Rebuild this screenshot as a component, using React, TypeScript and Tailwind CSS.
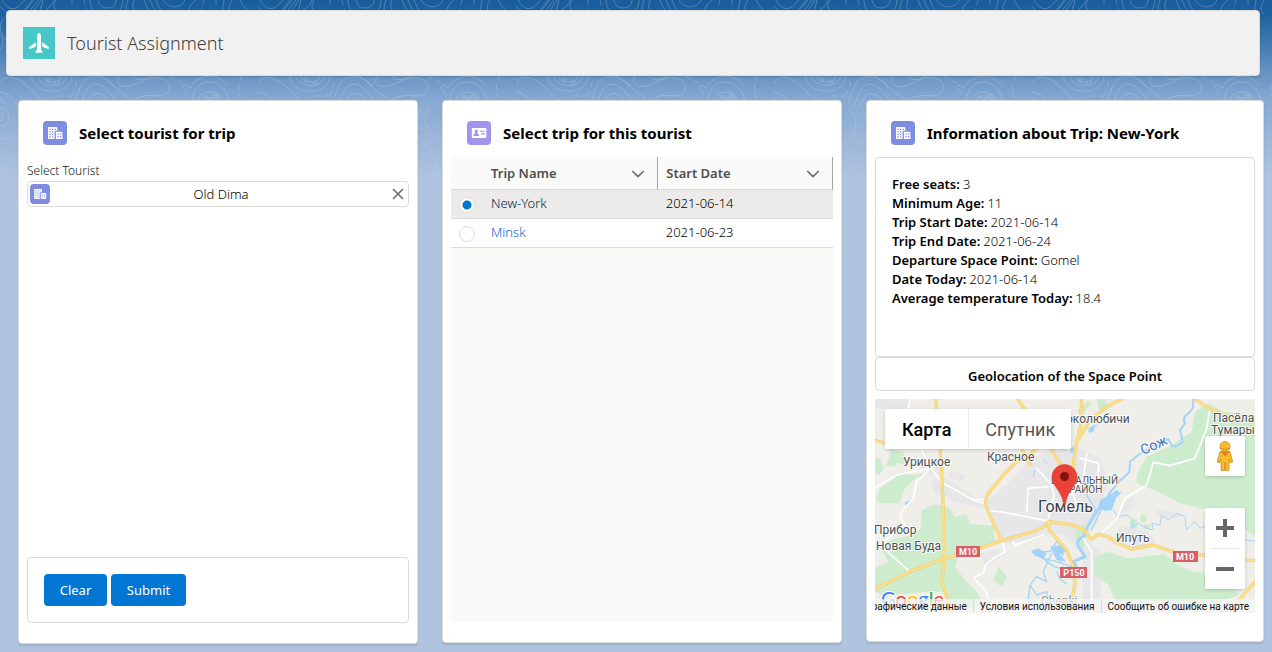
import { useState } from "react";
import type { ReactNode } from "react";

const trips = [
  { id: "ny", name: "New-York", start: "2021-06-14" },
  { id: "minsk", name: "Minsk", start: "2021-06-23" },
];

const details = [
  ["Free seats:", "3"],
  ["Minimum Age:", "11"],
  ["Trip Start Date:", "2021-06-14"],
  ["Trip End Date:", "2021-06-24"],
  ["Departure Space Point:", "Gomel"],
  ["Date Today:", "2021-06-14"],
  ["Average temperature Today:", "18.4"],
];

function BuildingIcon({ className }: { className: string }) {
  return (
    <svg viewBox="0 0 24 24" className={className} aria-hidden="true">
      <path fill="#fff" d="M5 6.7c0-.5.3-.7.7-.7h7.9c.4 0 .7.2.7.7v3.1h-1.6c-.7 0-1.1.4-1.1 1.1V18H5.7c-.4 0-.7-.3-.7-.7z" />
      <path fill="#fff" d="M12.9 11.3c0-.4.3-.6.6-.6h5.3c.4 0 .6.2.6.6v6.1c0 .4-.2.6-.6.6h-5.3c-.3 0-.6-.2-.6-.6z" />
      <path
        stroke="#7f8de1"
        strokeWidth="1.2"
        fill="none"
        d="M6.4 8.3h1.3M9 8.3h1.3M11.6 8.3h1.3M6.4 10.8h1.3M9 10.8h1.3M6.4 13.3h1.3M9 13.3h1.3M6.4 15.8h1.3M9 15.8h1.3M14.3 13.2h1.3M16.8 13.2h1.3M14.3 15.6h1.3M16.8 15.6h1.3"
      />
    </svg>
  );
}

function ContactIcon() {
  return (
    <svg viewBox="0 0 24 24" className="size-6 rounded bg-[#a094ed]" aria-hidden="true">
      <rect x="4.8" y="7" width="14.6" height="10" rx="1.2" fill="#fff" />
      <path fill="#a094ed" d="M9.2 8.8c1 0 1.6.7 1.6 1.6 0 .7-.3 1.2-.6 1.6-.1.4.1.6.5.8.9.4 1.4.8 1.4 1.6 0 .4-.3.6-.6.6H7c-.4 0-.6-.2-.6-.6 0-.8.5-1.2 1.4-1.6.4-.2.6-.4.4-.8-.3-.4-.6-.9-.6-1.6 0-.9.7-1.6 1.600-1.600z" />
      <path stroke="#a094ed" strokeWidth="1.1" d="M13 10.300h4.800M14 12.900h3.800" />
    </svg>
  );
}

function PlaneIcon() {
  return (
    <svg viewBox="0 0 32 32" className="size-8 bg-[#48c7c8]" aria-hidden="true">
      <path
        fill="#fff"
        d="M16 6c1.400 0 2 1.500 2 3v13.500l1.500 1.900c.5.6.2 1.400-.5 1.400h-6c-.7 0-1-.8-.5-1.400L14 22.500V9c0-1.500.6-3 2-3zM12.700 15.200v4.500l-5.200 2.100c-.9.300-1.600-.2-1.500-1 .1-.6.4-1 1-1.400zM19.300 15.200v4.500l5.200 2.100c.9.300 1.600-.2 1.500-1-.1-.6-.4-1-1-1.400z"
      />
    </svg>
  );
}

function Chevron() {
  return (
    <svg viewBox="0 0 14 14" className="size-[14px]" fill="none" stroke="#706e6b" strokeWidth="1.700" strokeLinecap="round" strokeLinejoin="round" aria-hidden="true">
      <path d="M1.800 4.500L7 9.700l5.200-5.200" />
    </svg>
  );
}

function Backdrop() {
  return (
    <svg className="absolute inset-x-0 top-0 -z-10 h-[200px] w-full" aria-hidden="true">
      <defs>
        <pattern id="contours" width="258" height="200" patternUnits="userSpaceOnUse">
          <g fill="none" stroke="#fff" strokeWidth="1">
            <path d="M2 0c5 9 12 12 19 4l4-4M-4 0c8 15 20 20 30 8l6-8M24 12l10-12M29 12l9-12M33 12l8-12M40 12l3-12" />
            <path d="M54 0c-2 8-10 10-14 14M58 12c-6-4-4-8-2-12" />
            <path d="M90 0c0 12 8 15 16 15s17-3 17-15M98 0c1 5 4 8 9 8s9-3 9-8M134 0c-3 8 0 12 6 14M128 0c-2 6-3 10 0 14" />
            <path d="M144 0c3 8 6 12 8 14M150 0c3 8 6 12 8 14M156 0c3 8 6 12 8 14M163 0c4 8 18 10 22 0M188 12c2-8 6-10 8-12" />
            <path d="M222 14c0-6 2-10 2-14M232 0c-4 6-4 10 0 14M240 0c4 8 9 12 14 14" />
            <path strokeDasharray="5 4" d="M72 0v14M84 0c2 8 2 10 4 14M204 0l-4 14M216 0v14" />
            <path d="M6 40c-8-8-8-20 4-26M0 34c4 6 4 12-2 18M0 108c6 0 9 4 9 9s-3 9-9 9M-1 113a4 4 0 0 1 0 8M0 92c14 2 24 20 24 38" />
            <path d="M32 70c-6 26 40 28 40 6M37 70c-2 20 30 20 30 4M42 73c0 12 20 12 20 2" />
            <circle cx="48" cy="80" r="2" />
            <circle cx="57" cy="83" r="2" />
            <path d="M1 84c2-10 14-8 24 0s12 16 24 18M-2 82c-3 8 0 16 8 22" />
            <path d="M74 104c4-10 6-22 14-26 8-2 16-2 24 6 10 12 16 10 22 20M80 106c4-12 8-22 16-22 10 0 16 14 24 20M86 106c4-10 8-14 14-12 6 2 10 8 12 14M88 73c14 2 18 6 26 14" />
            <path d="M120 74c-6 10 0 14 10 12s18-10 28-8c10 0 16 10 8 16-8 4-14 0-22 2s-12 4-16 10M134 76c4 6 12 4 22-2" />
            <path d="M192 106c0-16 6-24 18-24s20 14 20 26M198 106c0-10 4-14 12-14s14 8 14 14M188 94c-8-8-6-12 2-6 4-8 14-12 20-12s14 4 18 10" />
            <path d="M200 104l6-9 4 6 6-8 4 9M204 98h14M212 95l9 7" />
            <path strokeDasharray="5 4" d="M242 76c-6 10-4 18 2 30M170 76l14 8M58 96h16M76 82c0 8-4 12-6 18" />
            <path d="M0 140c20-6 28 10 18 24s-18 8-18 20M0 158c8-4 12 2 8 8s-8 6-8 6M164 106c-4 10-10 26 0 36s14 6 14 24-20 18-14 36M172 108c-6 6-8 18 2 24s18 18 8 34M160 128c8 0 12 8 8 14s-12 6-14 0 0-12 6-14" />
            <path d="M76 110c10 10 6 24-6 34s-8 24 4 34M88 110c10 16 4 28-6 38s-6 16 6 28M66 130c-6 0-8 8-4 12" />
            <path strokeDasharray="5 4" d="M20 110c8 18 0 30-10 40M240 110c10 20 0 40 10 60M170 150c10 10 10 20 0 34" />
          </g>
        </pattern>
        <linearGradient id="fade" x1="0" y1="0" x2="0" y2="1">
          <stop offset="0" stopColor="#fff" stopOpacity="0.24" />
          <stop offset="0.500" stopColor="#fff" stopOpacity="0.2" />
          <stop offset="1" stopColor="#fff" stopOpacity="0" />
        </linearGradient>
        <mask id="fadeMask">
          <rect width="100%" height="100%" fill="url(#fade)" />
        </mask>
      </defs>
      <rect width="100%" height="100%" fill="url(#contours)" mask="url(#fadeMask)" />
    </svg>
  );
}

const majorRoads = [
  "M197 12L210 160L215 230L222 400L222 490L216 560L228 600L245 654",
  "M15 582L120 530L222 490L300 470L395 437L490 410L520 396Q532 382 545 381L600 388L640 402L660 430Q668 434 676 424L690 418L715 426L745 446L785 462L850 450L925 476L1010 480L1080 492L1155 497",
  "M443 12L475 60L510 130L545 165L575 215",
  "M500 160Q470 190 440 200L400 240L355 295Q340 318 352 345L395 437",
  "M455 162L480 210",
  "M537 378L538 405L590 465L610 515L615 565L605 620L600 654",
  "M635 12L632 90L615 170L608 225",
  "M755 12Q690 40 655 85L620 140",
  "M975 12L1015 40L1075 65L1155 78",
  "M1155 560L1120 600L1100 625",
  "M15 137L60 147",
];

const minorRoads = [
  "M120 12L115 42",
  "M15 278L80 240L170 222L180 215L155 165M180 215L215 262L310 315L345 325M345 345L400 352L535 378M310 315L345 312",
  "M180 222L140 260L130 310L95 350Q88 370 104 386L60 425L35 450Q60 480 120 530",
  "M397 440L405 470L370 490L345 512L340 535L310 548L350 590L360 640",
  "M430 440L435 450L520 420M470 350L475 280L540 275M500 220L545 270L552 300L535 375M575 210L610 300L625 340",
  "M630 190L687 205L680 285M650 175L640 250L600 300",
  "M1020 40L1010 100L975 190L900 212L850 202L830 270L765 310L742 370L688 420",
  "M640 430L665 470L665 654",
];

const parks = [
  "M62 162L103 172L104 208L80 205L75 215L45 212L58 190z",
  "M15 190L30 190L42 220L28 240L15 236z",
  "M30 280L75 250L80 240L168 238L135 250L105 280L88 325L35 325L18 312z",
  "M155 345L195 328L235 335L255 365L290 358L300 388L370 392L375 440L300 462L270 480L255 515L285 555L320 590L345 640L250 630L225 590L175 590L40 602L15 590L15 520L55 500L25 450L80 430L130 420L152 400z",
  "M385 515L410 545L396 576L370 558z",
  "M800 240L830 185L905 150L965 110L975 50L1015 25L1060 50L1155 60L1155 425L1120 400L1075 335L1015 345L930 325L860 288L800 265z",
  "M672 490L710 470L775 490L885 478L915 505L965 530L1085 540L1105 600L1040 625L735 615L715 570L675 540z",
  "M780 375L800 372L802 396L780 394zM810 362L828 358L830 380L812 382zM820 390L840 388L838 402L822 402z",
  "M615 410L645 385L650 420L640 465L622 460z",
  "M680 12L705 12L715 40L690 60zM620 50L650 20L668 22L640 55z",
];

const cityBlocks = [
  "M430 250L470 205L520 170L610 150L690 190L715 250L700 310L680 380L645 430L695 470L690 654L640 654L635 470L580 420L545 415L480 440L400 445L365 370L350 320z",
  "M185 255L215 240L290 290L345 330L340 345L250 318L190 292z",
  "M15 12L118 12L115 42L15 42z",
  "M140 210L165 185L210 205L215 245L180 240zM240 225L285 240L275 262L238 250zM235 545L285 560L278 580L235 565z",
  "M330 475L390 460L400 480L350 512zM360 325L390 330L380 348z",
  "M745 400L790 388L850 425L855 455L780 460L740 440zM860 345L900 350L935 358L920 370L858 365zM770 320L790 300L800 335L745 360z",
];

function MapDrawing() {
  return (
    <svg viewBox="0 0 380 214" preserveAspectRatio="xMidYMid slice" className="block h-full w-full" role="img" aria-label="Гомель">
      <g transform="translate(-5 -4) scale(0.33333)" fill="none" strokeLinecap="round" strokeLinejoin="round">
        <path fill="#f0eee9" d="M0 0h1200v700H0z" />
        {cityBlocks.map((d) => (
          <path key={d} d={d} fill="#e7e7e9" />
        ))}
        {parks.map((d) => (
          <path key={d} d={d} fill="#cdecce" />
        ))}
        <g stroke="#a3d3f9">
          <path strokeWidth="6" d="M970 12L968 40L955 55Q935 70 945 85L930 105L938 140Q920 160 905 152L895 132L860 145L830 165L805 180L780 200L778 232L745 262L735 275L715 300" />
          <path strokeWidth="9" d="M740 290L705 320L680 350L655 390L640 425Q610 440 632 465L645 485L610 500L622 520" />
          <path strokeWidth="4" d="M680 350L650 300L660 270M700 330L665 405M620 520L560 500L520 490L490 470M500 470L540 470L560 440L585 460L570 500M520 490Q560 530 600 520M545 475L520 530L530 560L500 545L480 570L500 600L530 590L540 620L515 640M480 570L475 610L505 650M560 530Q570 560 590 565" />
          <path strokeWidth="3" d="M728 345L745 365L770 360L790 375L785 400L805 385L825 398L850 405L845 385L870 390L875 362L895 375L920 355L945 365L950 405L975 380L990 400L1010 392L1030 405L1060 400L1080 425L1120 435L1155 437" />
          <path strokeWidth="3" d="M655 110L665 95L680 90M115 325L128 310M490 245L495 225M520 195L530 205M210 200L230 188" />
        </g>
        <path fill="#a3d3f9" d="M690 315L718 300L735 290L755 292L738 310L725 345L705 348L685 335zM483 468L505 460L530 475L520 492L495 482zM540 455L575 450L595 465L570 480L590 500L560 495zM105 322L122 316L118 332L105 330zM602 160L615 155L612 170L600 175zM656 100L675 90L672 108L660 115z" />
        <g stroke="#fff" strokeWidth="5">
          {minorRoads.map((d) => (
            <path key={d} d={d} />
          ))}
        </g>
        <g stroke="#f0cf74" strokeWidth="10">
          {majorRoads.map((d) => (
            <path key={d} d={d} />
          ))}
        </g>
        <g stroke="#fde08c" strokeWidth="6">
          {majorRoads.map((d) => (
            <path key={d} d={d} />
          ))}
        </g>
      </g>
      <g fontFamily="Roboto, sans-serif" fill="#4d5156" stroke="#fff" strokeWidth="2" strokeOpacity="0.8" style={{ paintOrder: "stroke" }}>
        <g fontSize="12">
          <text x="28" y="67">Урицкое</text>
          <text x="112" y="62">Красное</text>
          <text x="-1" y="135">Прибор</text>
          <text x="1" y="151">Новая Буда</text>
          <text x="191" y="24">околюбичи</text>
          <text x="338" y="23">Пасёла</text>
          <text x="336" y="35">Тумары</text>
          <text x="241" y="143">Ипуть</text>
        </g>
        <g fontSize="10">
          <text x="176" y="85">ЕНТРАЛЬНЫЙ</text>
          <text x="194" y="94">РАЙОН</text>
        </g>
        <text x="163" y="113" fontSize="16" fill="#3c4043">Гомель</text>
        <text x="166" y="206" fontSize="12" fill="#8a8d91">Chenki</text>
        <text x="268" y="56" fontSize="14" fill="#3f6fc4" transform="rotate(-24 268 56)">Сож</text>
      </g>
      <g fill="#d85f65">
        <path d="M81 147h24v11H81zM298 152h25v11H298zM185 168h27v11H185z" />
      </g>
      <g fontFamily="Roboto, sans-serif" fontSize="9" fontWeight="700" fill="#fff" textAnchor="middle">
        <text x="93" y="156">M10</text>
        <text x="310" y="161">M10</text>
        <text x="199" y="177">P150</text>
      </g>
      <text x="6" y="207" fontFamily="Lato, sans-serif" fontSize="20" fontWeight="500" stroke="#fff" strokeWidth="2" style={{ paintOrder: "stroke" }}>
        <tspan fill="#4285f4">G</tspan>
        <tspan fill="#ea4335">o</tspan>
        <tspan fill="#fbbc04">o</tspan>
        <tspan fill="#4285f4">g</tspan>
        <tspan fill="#34a853">l</tspan>
        <tspan fill="#ea4335">e</tspan>
      </text>
      <path fill="#ea4335" stroke="#d23a2c" strokeWidth="0.500" d="M189.500 65.500c7 0 12.500 5.500 12.500 12.300 0 4.200-1.600 7-4.400 11-3.300 4.700-6 9-7 15.200-.2 1.600-.5 2-1.100 2s-.9-.4-1.100-2c-1-6.200-3.700-10.500-7-15.200-2.800-4-4.400-6.800-4.400-11 0-6.800 5.500-12.300 12.500-12.300z" />
      <circle cx="189.500" cy="77.500" r="4.500" fill="#811411" />
    </svg>
  );
}

function MapPanel() {
  return (
    <div className="relative mt-2 h-[214px] overflow-hidden font-['Roboto',sans-serif]">
      <MapDrawing />
      <div className="absolute top-[10px] left-[10px] flex h-10 rounded-xs bg-white text-[18px] shadow-[0_1px_4px_-1px_rgba(0,0,0,0.3)]">
        <button type="button" className="border-r border-[#ececec] px-[17px] font-medium text-black">Карта</button>
        <button type="button" className="px-4 text-[#565656]">Спутник</button>
      </div>
      <button type="button" aria-label="Street View" className="absolute top-[37px] right-[10px] flex size-10 items-center justify-center rounded-xs bg-white shadow-[0_1px_4px_-1px_rgba(0,0,0,0.3)]">
        <svg viewBox="0 0 18 32" className="h-8 w-[18px]" stroke="#c8871d" strokeWidth="0.800" aria-hidden="true">
          <path fill="#fbbc2c" d="M4 11.500h10l2.700 10.500-2.200.6-1.300-3.600-.4 11.500H9.600L9 22.500l-.6 8H5.200L4.800 19l-1.300 3.600-2.200-.6z" />
          <path fill="#e6861c" stroke="none" d="M4.500 11.800h9L9 16.500z" />
          <circle cx="9" cy="6.500" r="5" fill="#fbbc2c" />
          <path fill="none" d="M4.300 8.200c3 1.500 6.400 1.500 9.400 0" />
        </svg>
      </button>
      <div className="absolute right-[10px] bottom-6 flex w-10 flex-col items-center rounded-xs bg-white shadow-[0_1px_4px_-1px_rgba(0,0,0,0.3)]">
        <button type="button" aria-label="+" className="flex size-10 items-center justify-center">
          <svg viewBox="0 0 18 18" className="size-[18px]" fill="#666" aria-hidden="true">
            <path d="M7 0h4v7h7v4h-7v7H7v-7H0V7h7z" />
          </svg>
        </button>
        <div className="h-px w-[30px] bg-[#e6e6e6]" />
        <button type="button" aria-label="−" className="flex size-10 items-center justify-center">
          <svg viewBox="0 0 18 18" className="size-[18px]" fill="#666" aria-hidden="true">
            <path d="M0 7h18v4H0z" />
          </svg>
        </button>
      </div>
      <div className="absolute inset-x-0 bottom-0 flex h-[14px] items-center justify-end overflow-hidden bg-[#f5f5f5]/75 text-[10px] whitespace-nowrap text-[#111]">
        <span className="px-1.5">рафические данные</span>
        <a href="#terms" className="border-l border-[#dcdcdc] px-1.5">Условия использования</a>
        <a href="#report" className="border-l border-[#dcdcdc] px-1.5">Сообщить об ошибке на карте</a>
      </div>
    </div>
  );
}

function Card({ icon, title, children }: { icon: ReactNode; title: string; children: ReactNode }) {
  return (
    <section className="min-w-0 rounded border border-[#dddbda] bg-white px-2 pt-5 shadow-[0_2px_2px_rgba(0,0,0,0.1)]">
      <header className="mb-3 flex h-6 items-center gap-3 px-4">
        {icon}
        <h2 className="text-[15px] leading-6 font-bold whitespace-nowrap text-black">{title}</h2>
      </header>
      {children}
    </section>
  );
}

export default function App() {
  const [selected, setSelected] = useState("ny");

  return (
    <div className="relative isolate min-h-screen bg-[#b0c4df] bg-[linear-gradient(to_bottom,#195c9c_0px,#1c619f_14px,#6b96c4_76px,#87a9d2_100px,#b0c4df_180px)] bg-no-repeat px-1.5 pt-2.5 pb-2 font-['Noto_Sans','Open_Sans',sans-serif] text-[13px] text-[#080707]">
      <Backdrop />
      <header className="mr-1.5 flex h-[66px] items-center gap-3 rounded border border-[#dddbda] bg-[#f1f1f1] px-4 shadow-[0_2px_2px_rgba(0,0,0,0.1)]">
        <PlaneIcon />
        <h1 className="text-[18px] leading-6 font-light text-[#3e3e3c]">Tourist Assignment</h1>
      </header>

      <main className="mt-6 mr-0.5 ml-3 grid grid-cols-[400fr_400fr_398fr] items-start gap-6">
        <Card icon={<BuildingIcon className="size-6 rounded bg-[#7f8de1]" />} title="Select tourist for trip">
          <div className="h-[400px] pt-1">
            <label htmlFor="tourist" className="block text-[12px] leading-5 font-light text-[#181716]">Select Tourist</label>
            <div className="flex h-[26px] items-center rounded border border-[#dddbda] pr-1 pl-0.5">
              <BuildingIcon className="size-5 shrink-0 rounded bg-[#7f8de1]" />
              <input id="tourist" defaultValue="Old Dima" className="min-w-0 flex-1 bg-transparent pt-0.5 text-center font-light text-black outline-none" />
              <button type="button" aria-label="Remove">
                <svg viewBox="0 0 12 12" className="size-3" stroke="#706e6b" strokeWidth="1.700" strokeLinecap="round" aria-hidden="true">
                  <path d="M1.500 1.500l9 9M10.500 1.500l-9 9" />
                </svg>
              </button>
            </div>
          </div>
          <div className="mb-5 flex gap-1 rounded border border-[#dddbda] p-4">
            <button type="button" className="h-8 w-[63px] rounded bg-[#0176d3] pt-0.5 text-white">Clear</button>
            <button type="button" className="h-8 w-[75px] rounded bg-[#0176d3] pt-0.5 text-white">Submit</button>
          </div>
        </Card>

        <Card icon={<ContactIcon />} title="Select trip for this tourist">
          <div className="mb-5 h-[465px] bg-[#fafaf9]">
            <table className="w-full table-fixed border-collapse text-left">
              <thead>
                <tr className="h-8 border-b border-[#dddbda] text-[#514f4d]">
                  <th className="w-8" aria-label="Choose" />
                  <th className="border-r border-[#a8a6a4] px-2 pt-0.5 font-semibold">
                    <div className="flex items-center justify-between pr-1">
                      Trip Name
                      <Chevron />
                    </div>
                  </th>
                  <th className="border-r border-[#a8a6a4] px-2 pt-0.5 font-semibold">
                    <div className="flex items-center justify-between pr-1">
                      Start Date
                      <Chevron />
                    </div>
                  </th>
                </tr>
              </thead>
              <tbody>
                {trips.map((trip) => (
                  <tr key={trip.id} className={trip.id === selected ? "h-[29px] border-b border-[#dddbda] bg-[#ecebea]" : "h-[29px] border-b border-[#dddbda] bg-white"}>
                    <td className="pt-[3px] pl-2">
                      <input
                        type="radio"
                        name="trip"
                        aria-label={trip.name}
                        checked={trip.id === selected}
                        onChange={() => setSelected(trip.id)}
                        className="block size-4 appearance-none rounded-full border border-[#dddbda] bg-white checked:bg-[radial-gradient(circle,#0176d3_4px,#fff_5px)]"
                      />
                    </td>
                    <td className="px-2">
                      <a href={"#" + trip.id} className={trip.id === selected ? "font-light text-[#001d4d]" : "font-light text-[#0066cc]"}>{trip.name}</a>
                    </td>
                    <td className="px-2 font-light text-black">{trip.start}</td>
                  </tr>
                ))}
              </tbody>
            </table>
          </div>
        </Card>

        <Card icon={<BuildingIcon className="size-6 rounded bg-[#7f8de1]" />} title="Information about Trip: New-York">
          <dl className="h-[200px] rounded border border-[#dddbda] px-4 pt-[17px] leading-[19px]">
            {details.map(([label, value]) => (
              <div key={label} className="flex gap-[3px]">
                <dt className="font-semibold text-black">{label}</dt>
                <dd className="font-light">{value}</dd>
              </div>
            ))}
          </dl>
          <h3 className="h-[34px] rounded border border-[#dddbda] pt-0.5 text-center leading-8 font-semibold text-black">
            Geolocation of the Space Point
          </h3>
          <MapPanel />
          <div className="h-7" />
        </Card>
      </main>
    </div>
  );
}
